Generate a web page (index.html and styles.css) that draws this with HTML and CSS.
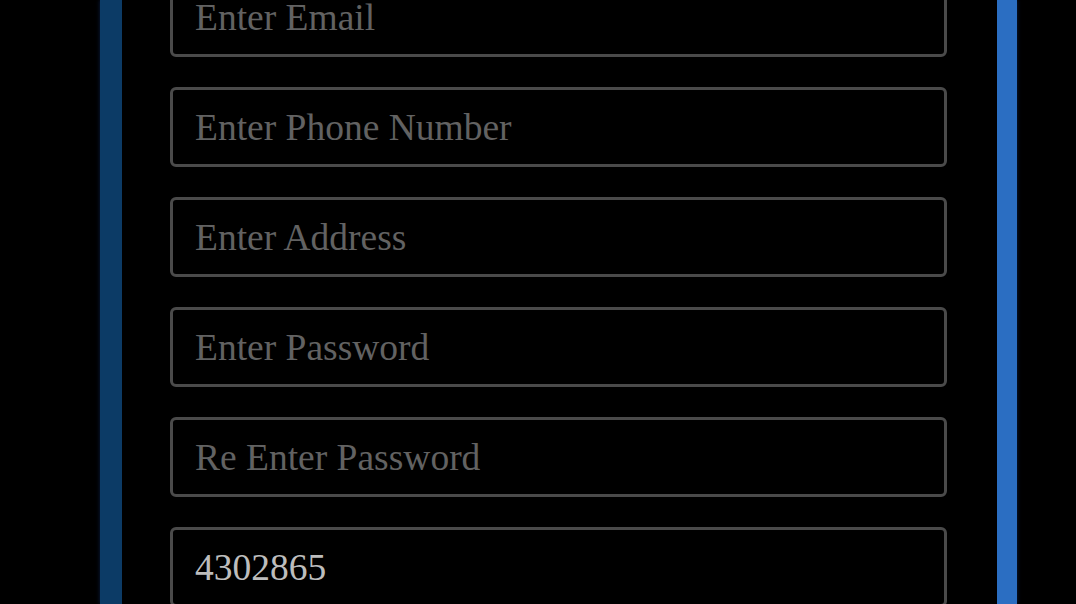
FILE: index.html
```html
<!DOCTYPE html>
<html lang="en">
<head>
<meta charset="utf-8">
<title>Register</title>
<link rel="stylesheet" href="styles.css">
</head>
<body>
<div class="panel">
  <form class="form">
    <input class="field" type="email" placeholder="Enter Email">
    <input class="field" type="tel" placeholder="Enter Phone Number">
    <input class="field" type="text" placeholder="Enter Address">
    <input class="field" type="password" placeholder="Enter Password">
    <input class="field" type="password" placeholder="Re Enter Password">
    <input class="field" type="text" value="4302865">
  </form>
</div>
</body>
</html>
```
FILE: styles.css
```css
html, body {
  margin: 0;
  padding: 0;
  background: #000;
  height: 100%;
  overflow: hidden;
}
.panel {
  box-sizing: border-box;
  display: flex;
  flex-direction: column;
  margin-left: 100px;
  width: 917px;
  height: 604px;
  border-left: 22px solid #0c3b66;
  border-right: 20px solid #2b6ec2;
  padding: 0 50px 0 48px;
  background: #000;
  box-shadow: 0 0 4px rgba(20, 60, 140, 0.5);
}
.form {
  display: flex;
  flex-direction: column;
  gap: 30px;
  margin-top: -23px;
}
.field {
  box-sizing: border-box;
  display: block;
  flex: none;
  width: 100%;
  height: 80px;
  margin: 0;
  padding: 0 22px;
  border: 3px solid #4a4a4a;
  border-radius: 6px;
  background: #000;
  color: #bdbdbd;
  font-family: "Liberation Serif", "Times New Roman", serif;
  font-size: 37.5px;
  outline: none;
}
.field::placeholder {
  color: #626262;
  opacity: 1;
}
```
